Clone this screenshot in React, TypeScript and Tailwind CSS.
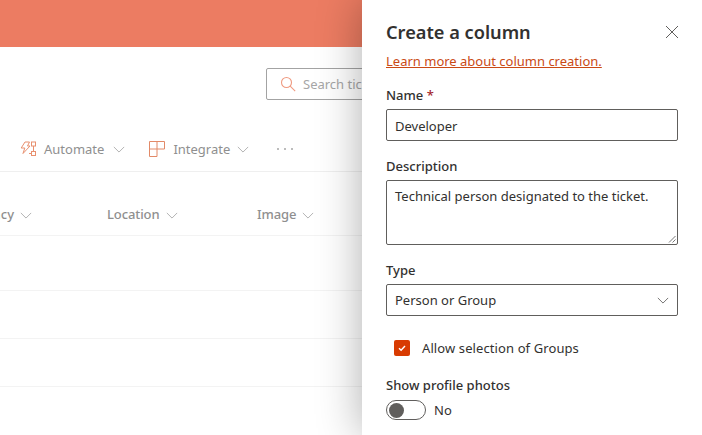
const font = "[font-family:'Noto_Sans',sans-serif]";

function Chevron({ className }: { className: string }) {
  return (
    <svg className={className} width="14" height="8" viewBox="0 0 14 8" fill="none" stroke="currentColor" strokeWidth="1">
      <path d="M1 1l6 6 6-6" />
    </svg>
  );
}

function HeaderCell({ label, className }: { label: string; className: string }) {
  return (
    <div className={`flex items-center shrink-0 ${className}`}>
      <span className="text-[13px] font-medium tracking-[-0.1px] text-[#8f8f8f]">{label}</span>
      <Chevron className="ml-[6px] text-[#a6a6a6] w-[12px] h-[7px]" />
    </div>
  );
}

function Field({ label, children, required }: { label: string; children: React.ReactNode; required?: boolean }) {
  return (
    <div className="flex flex-col">
      <label className="h-[20px] text-[13px] leading-[20px] font-medium text-[#323130]">
        {label}
        {required && <span className="text-[#a4262c]"> *</span>}
      </label>
      {children}
    </div>
  );
}

export default function App() {
  return (
    <div className={`flex w-[702px] h-[435px] overflow-hidden bg-white ${font}`}>
      <div className="w-[362px] shrink-0 flex flex-col overflow-hidden">
        <div className="h-[47px] shrink-0 bg-[#ec7c62]" />

        <div className="h-[78px] shrink-0 pt-[21px] pl-[266px]">
          <div className="w-[200px] h-[32px] flex items-center border border-[#a3a3a3] rounded-[2px] pl-[13px]">
            <svg width="16" height="16" viewBox="0 0 16 16" fill="none" stroke="#ef9a80" strokeWidth="1.1">
              <circle cx="6.5" cy="6.5" r="5" />
              <path d="M10.2 10.2l5 5" />
            </svg>
            <span className="ml-[7px] pt-[2px] text-[13px] text-[#a6a6a6] whitespace-nowrap">Search tickets</span>
          </div>
        </div>

        <div className="h-[47px] shrink-0 flex items-center border-b border-[#efefef] pl-[20px] pt-[2px]">
          <svg className="shrink-0" width="17" height="16" viewBox="0 0 17 16" fill="none" stroke="#e8906f" strokeWidth="1">
            <path d="M5 1h4.5L7.5 5H10l-7 7.5L4.8 7H1.2z" />
            <rect x="11.5" y="1" width="4" height="4" />
            <rect x="11.5" y="10.5" width="4" height="4" />
            <path d="M13.5 5v5.5M9 12.5h2.5" />
          </svg>
          <span className="ml-[7px] pt-[1px] text-[13px] text-[#8f8f8f]">Automate</span>
          <Chevron className="ml-[9px] text-[#a6a6a6] w-[12px] h-[7px]" />
          <svg className="ml-[24px] shrink-0" width="16" height="16" viewBox="0 0 16 16" fill="none" stroke="#e28a68" strokeWidth="1">
            <path d="M.5.5h15v7.5H8v7.5H.5zM.5 8H8V.5" />
          </svg>
          <span className="ml-[8px] pt-[1px] text-[13px] text-[#8f8f8f]">Integrate</span>
          <Chevron className="ml-[7px] text-[#a6a6a6] w-[12px] h-[7px]" />
          <div className="ml-[28px] flex gap-[5px]">
            <span className="w-[2px] h-[2px] rounded-full bg-[#a6a6a6]" />
            <span className="w-[2px] h-[2px] rounded-full bg-[#a6a6a6]" />
            <span className="w-[2px] h-[2px] rounded-full bg-[#a6a6a6]" />
          </div>
        </div>

        <div className="h-[64px] shrink-0 flex items-center border-b border-[#f3f3f3] pt-[23px]">
          <div className="w-[32px] shrink-0 flex items-center justify-end overflow-hidden">
            <span className="text-[13px] font-medium text-[#8f8f8f] whitespace-nowrap">Urgency</span>
            <Chevron className="ml-[6px] shrink-0 text-[#a6a6a6] w-[12px] h-[7px]" />
          </div>
          <HeaderCell label="Location" className="ml-[75px] w-[150px]" />
          <HeaderCell label="Image" className="" />
        </div>
        <div className="h-[55px] shrink-0 border-b border-[#f3f3f3]" />
        <div className="h-[48px] shrink-0 border-b border-[#f3f3f3]" />
        <div className="h-[48px] shrink-0 border-b border-[#f3f3f3]" />
      </div>

      <aside className="relative z-10 w-[340px] shrink-0 bg-white shadow-[0_0_42px_rgba(0,0,0,0.32)] pl-[24px] pr-[24px]">
        <div className="flex items-center justify-between h-[32px] mt-[16px] mr-[-1px]">
          <h1 className="pt-[2px] text-[18.2px] font-semibold text-[#323130]">Create a column</h1>
          <svg width="14" height="14" viewBox="0 0 14 14" fill="none" stroke="#605e5c" strokeWidth="1">
            <path d="M1 1l12 12M13 1L1 13" />
          </svg>
        </div>
        <a className="block h-[20px] mt-[3px] text-[13px] leading-[20px] text-[#ca4a15] underline">Learn more about column creation.</a>

        <div className="mt-[14px] flex flex-col gap-[15px]">
          <Field label="Name" required>
            <div className="mt-[4px] h-[32px] flex items-center rounded-[2px] border border-[#605e5c] px-[8px] pt-[3px] text-[13px] text-[#323130]">
              Developer
            </div>
          </Field>
          <Field label="Description">
            <div className="relative mt-[4px] h-[65px] rounded-[2px] border border-[#605e5c] px-[8px] py-[5px] text-[13px] leading-[20px] text-[#323130]">
              Technical person designated to the ticket.
              <svg className="absolute right-[1px] bottom-[1px]" width="8" height="8" viewBox="0 0 8 8" stroke="#555" strokeWidth="0.8">
                <path d="M1 7.5L7.5 1M4.5 7.5L7.5 4.5" />
              </svg>
            </div>
          </Field>
          <Field label="Type">
            <div className="mt-[4px] h-[32px] flex items-center justify-between rounded-[2px] border border-[#605e5c] pl-[8px] pr-[8px] text-[13px] text-[#323130]">
              <span className="pt-[2px]">Person or Group</span>
              <Chevron className="text-[#605e5c] w-[12px] h-[7px]" />
            </div>
          </Field>
        </div>

        <div className="mt-[22px] ml-[8px] flex items-center h-[20px]">
          <span className="w-[16px] h-[16px] rounded-[2px] bg-[#d83b01] flex items-center justify-center">
            <svg width="10" height="10" viewBox="0 0 10 10" fill="none" stroke="white" strokeWidth="1.4">
              <path d="M2 5.2l2.1 2.1L8 3" />
            </svg>
          </span>
          <span className="ml-[12px] pt-[2px] text-[13px] tracking-[0.1px] text-[#323130]">Allow selection of Groups</span>
        </div>

        <div className="mt-[17px] h-[20px] text-[13px] leading-[20px] font-medium text-[#323130]">Show profile photos</div>
        <div className="mt-[5px] flex items-center h-[20px]">
          <span className="w-[40px] h-[20px] rounded-full border border-[#605e5c] flex items-center pl-[2px]">
            <span className="w-[15px] h-[15px] rounded-full bg-[#605e5c]" />
          </span>
          <span className="ml-[8px] leading-[20px] text-[13px] text-[#323130]">No</span>
        </div>
      </aside>
    </div>
  );
}
